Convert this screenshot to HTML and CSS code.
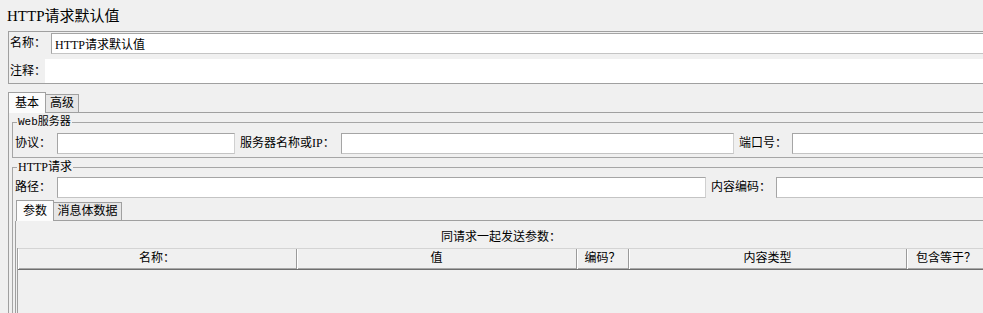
FILE: index.html
```html
<!DOCTYPE html>
<html lang="zh-CN">
<head>
    <meta charset="UTF-8">
    <title>HTTP请求默认值</title>
    <link rel="stylesheet" href="styles.css">
</head>
<body>
    <div class="page">
        <div class="title">HTTP请求默认值</div>

        <div class="namebox">
            <div class="row name-row">
                <label class="lbl lbl-name" for="name">名称：</label>
                <input class="field" id="name" type="text" value="HTTP请求默认值">
            </div>
            <div class="row comment-row">
                <label class="lbl lbl-comment">注释：</label>
                <div class="area"></div>
            </div>
        </div>

        <div class="tabs outer-tabs">
            <div class="tab active tab-basic">基本</div>
            <div class="tab tab-adv">高级</div>
            <div class="tab-fill"></div>
        </div>
        <div class="tabbody outer-body">
            <fieldset class="group web-group">
                <legend>Web服务器</legend>
                <div class="row field-row">
                    <label class="lbl w-proto">协议：</label>
                    <input class="field f-proto" type="text">
                    <label class="lbl w-host">服务器名称或IP：</label>
                    <input class="field f-host" type="text">
                    <label class="lbl w-port">端口号：</label>
                    <input class="field f-grow" type="text">
                </div>
            </fieldset>

            <fieldset class="group http-group">
                <legend>HTTP请求</legend>
                <div class="row field-row http-row">
                    <label class="lbl w-proto">路径：</label>
                    <input class="field f-path" type="text">
                    <label class="lbl w-enc">内容编码：</label>
                    <input class="field f-grow" type="text">
                </div>

                <div class="tabs inner-tabs">
                    <div class="tab active tab-params">参数</div>
                    <div class="tab tab-body">消息体数据</div>
                    <div class="tab-fill"></div>
                </div>
                <div class="tabbody inner-body">
                    <div class="caption">同请求一起发送参数：</div>
                    <div class="table">
                        <div class="thead">
                            <div class="th c-name">名称：</div>
                            <div class="th c-value">值</div>
                            <div class="th c-enc">编码？</div>
                            <div class="th c-type">内容类型</div>
                            <div class="th c-eq">包含等于？</div>
                        </div>
                        <div class="tbody"></div>
                    </div>
                </div>
            </fieldset>
        </div>
    </div>
</body>
</html>
```

FILE: styles.css
```css
* {
    box-sizing: border-box;
}

html,
body {
    margin: 0;
    overflow: hidden;
}

body {
    background-color: #f0f0f0;
    color: #000;
    font: 12px/14px "Liberation Serif", "Noto Sans CJK SC", serif;
}

.page {
    width: 987px;
}

.title {
    height: 31px;
    padding: 7px 0 0 7px;
    font-size: 15px;
    line-height: 18px;
}

/* name / comment box */
.namebox {
    height: 53px;
    margin-left: 8px;
    padding-top: 1px;
    border: 1px solid #a0a0a0;
}

.row {
    display: flex;
    align-items: stretch;
}

.name-row {
    height: 21px;
}

.comment-row {
    height: 24px;
    margin-top: 5px;
}

.lbl {
    flex: none;
    line-height: 21px;
    white-space: nowrap;
}

.comment-row .lbl {
    line-height: 24px;
}

.lbl-name {
    width: 42px;
    padding-left: 1px;
}

.lbl-comment {
    width: 36px;
    padding-left: 1px;
}

.field {
    height: 21px;
    margin: 0;
    padding: 0 3px;
    border: 1px solid;
    border-color: #a5a5a5 #d0d0d0 #c4c4c4 #a5a5a5;
    background: #fff;
    font: inherit;
    color: #000;
    outline: none;
    min-width: 0;
}

.name-row .field {
    flex: 1;
}

.area {
    flex: 1;
    background: #fff;
}

/* tabs */
.tabs {
    display: flex;
    align-items: flex-end;
}

.outer-tabs {
    margin: 8px 0 0 8px;
}

.inner-tabs {
    margin: 2px 0 0 1px;
}

.tab {
    flex: none;
    height: 19px;
    padding-top: 1px;
    border: 1px solid #a0a0a0;
    border-left: none;
    background: #e6e6e6;
    text-align: center;
    white-space: nowrap;
}

.tab.active {
    height: 21px;
    padding-top: 3px;
    border-left: 1px solid #a0a0a0;
    border-bottom: none;
    background: #fcfcfc;
}

.tab-fill {
    flex: 1;
    border-bottom: 1px solid #a0a0a0;
}

.tab-basic,
.tab-params {
    width: 38px;
}

.tab-adv {
    width: 33px;
}

.tab-body {
    width: 68px;
}

.tabbody {
    border-left: 1px solid #a0a0a0;
}

.outer-body {
    margin-left: 8px;
    padding: 3px 0 0 3px;
}

/* titled groups */
.group {
    min-width: 0;
    margin: 0;
    padding: 0 0 3px 2px;
    border: 1px solid #a6a6a6;
}

.group legend {
    margin-left: 2px;
    padding: 0 1px;
    font-size: 12px;
    line-height: 12px;
}

.web-group legend {
    font-family: "Liberation Mono", "Noto Sans CJK SC", monospace;
    font-size: 11px;
}

.http-group {
    margin-top: 3px;
    padding-bottom: 0;
}

.field-row {
    height: 21px;
    margin-top: 5px;
}

.http-row {
    margin-top: 4px;
}

.w-proto {
    width: 42px;
}

.w-host {
    width: 106px;
    padding-left: 5px;
}

.w-port {
    width: 58px;
    padding-left: 5px;
}

.w-enc {
    width: 70px;
    padding-left: 5px;
}

.f-proto {
    width: 178px;
}

.f-host {
    width: 393px;
}

.f-path {
    width: 649px;
}

.f-grow {
    flex: 1;
}

/* params table */
.inner-body {
    padding-top: 9px;
}

.caption {
    height: 14px;
    text-align: center;
}

.table {
    margin: 4px 0 0 1px;
    border-left: 1px solid #a0a0a0;
}

.thead {
    display: flex;
    height: 22px;
    border-top: 1px solid #d4d4d4;
    border-bottom: 1px solid #6e6e6e;
    box-shadow: inset 0 -1px 0 #a8a8a8;
}

.th {
    flex: none;
    border-right: 1px solid #9a9a9a;
    box-shadow: inset 1px 0 0 #fff;
    text-align: center;
    line-height: 19px;
    white-space: nowrap;
}

.c-name {
    width: 279px;
}

.c-value {
    width: 280px;
}

.c-enc {
    width: 52px;
}

.c-type {
    width: 278px;
}

.c-eq {
    flex: 1;
}

.tbody {
    height: 43px;
}
```
